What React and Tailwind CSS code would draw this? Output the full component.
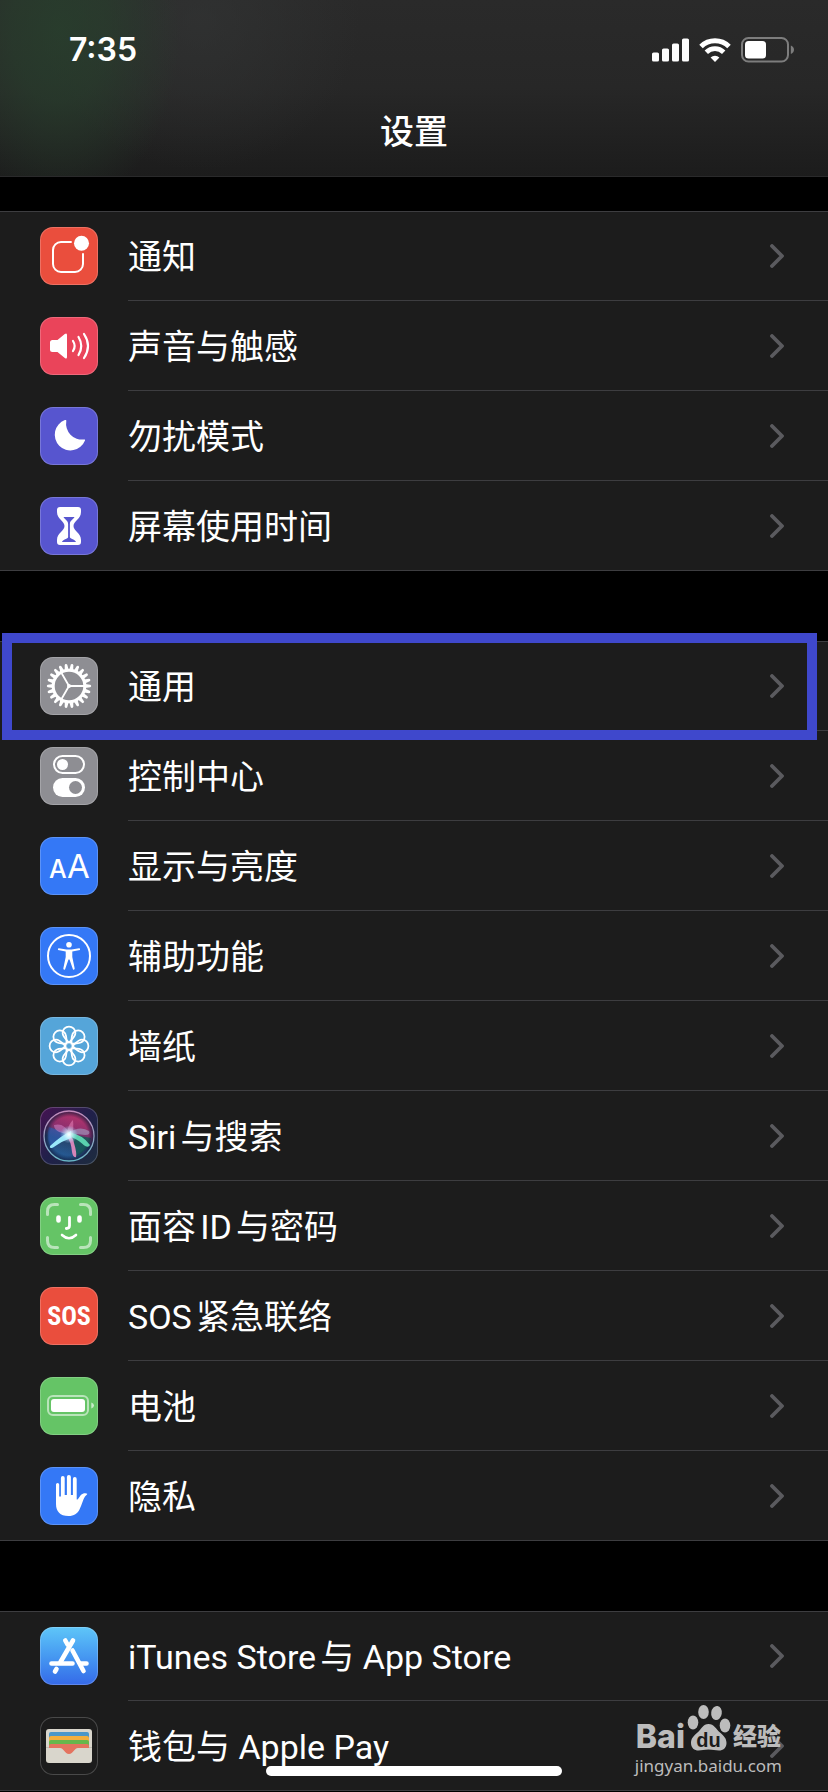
import React from "react";

function Tile({ className, children }) {
  return (
    <span
      className={`block size-[58px] shrink-0 overflow-hidden rounded-[13px] ring-1 ring-white/20 ring-inset ${className}`}
    >
      <svg viewBox="0 0 58 58" className="size-full" fill="none" aria-hidden="true">
        {children}
      </svg>
    </span>
  );
}

const gearTeeth = Array.from({ length: 22 }, (_, i) => (i * 360) / 22);
const petals = [0, 45, 90, 135, 180, 225, 270, 315];

const icons = {
  notifications: (
    <Tile className="bg-[#ea4e3d]">
      <path d="M31.7 15H21a8 8 0 0 0-8 8v14a8 8 0 0 0 8 8h14a8 8 0 0 0 8-8V26.3" stroke="#fff" strokeWidth="2" />
      <circle cx="41.5" cy="16.3" r="7.5" fill="#fff" />
    </Tile>
  ),
  sound: (
    <Tile className="bg-[#ea445a]">
      <path d="M12.5 23H17.5L24.8 17Q27 15.600 27 18V40Q27 42.400 24.800 41L17.500 35H12.500Q10 35 10 32.500V25.500Q10 23 12.500 23Z" fill="#fff" />
      <path d="M33 24Q36.300 29 33 34M38.500 20Q44 29 38.500 38M44 17Q52 29 44 41" stroke="#fff" strokeWidth="2.2" strokeLinecap="round" />
    </Tile>
  ),
  moon: (
    <Tile className="bg-[#5755cf]">
      <path d="M24.900 13A15.700 15.700 0 1 0 45 33.600C45.400 32.700 44.700 32.200 44 32.500A16 16 0 0 1 26.300 13.900C26.500 13 25.700 12.700 24.900 13Z" fill="#fff" />
    </Tile>
  ),
  hourglass: (
    <Tile className="bg-[#5755cf]">
      <path d="M20 10H38Q41 10 41 13V15C41 22 33.500 24 33.500 29S41 36 41 43V45Q41 48 38 48H20Q17 48 17 45V43C17 36 24.500 34 24.500 29S17 22 17 15V13Q17 10 20 10Z" fill="#fff" />
      <path d="M23.500 20H34.500C33 22.500 29.900 23.500 29.900 27V40C29.900 42 35.500 42.500 36 45H22C22.500 42.500 28.100 42 28.100 40V27C28.100 23.500 25 22.500 23.500 20Z" fill="#5755cf" />
    </Tile>
  ),
  gear: (
    <Tile className="bg-[#8e8e93]">
      {gearTeeth.map((a) => (
        <path key={a} d="M45 27L50.200 27.700Q51.200 28 51.200 29T50.200 30.300L45 31Z" fill="#fff" transform={`rotate(${a} 29 29)`} />
      ))}
      <circle cx="29" cy="29" r="15.800" stroke="#fff" strokeWidth="3" />
      <path d="M29 29H44M29 29L21.500 16M29 29L21.500 42" stroke="#fff" strokeWidth="1.800" />
      <circle cx="29" cy="29" r="2" fill="#fff" />
    </Tile>
  ),
  toggles: (
    <Tile className="bg-[#8e8e93]">
      <rect x="14" y="9" width="30" height="17" rx="8.500" stroke="#fff" strokeWidth="2" />
      <circle cx="22.500" cy="17.500" r="5.500" fill="#fff" />
      <rect x="13" y="31" width="32" height="19" rx="9.500" fill="#fff" />
      <circle cx="35.500" cy="40.500" r="6.500" fill="#8e8e93" />
    </Tile>
  ),
  display: (
    <Tile className="bg-[#3478f6]">
      <text x="9" y="41" fill="#fff" fontFamily="Inter, sans-serif" fontWeight="500" fontSize="25">A</text>
      <text x="27" y="41" fill="#fff" fontFamily="Inter, sans-serif" fontSize="33">A</text>
    </Tile>
  ),
  accessibility: (
    <Tile className="bg-[#3478f6]">
      <circle cx="29" cy="29" r="21" stroke="#fff" strokeWidth="2" />
      <circle cx="29" cy="17.700" r="2.800" fill="#fff" />
      <path d="M18.800 21.300L26.500 22.400H31.500L39.200 21.300Q40.600 21.600 40 23L32.300 24.600V30L34.700 41.500Q34.400 43 33 42.600L29.500 32.600H28.500L25 42.600Q23.600 43 23.300 41.500L25.700 30V24.600L18 23Q17.400 21.600 18.800 21.300Z" fill="#fff" />
    </Tile>
  ),
  wallpaper: (
    <Tile className="bg-[#55a5d9]">
      {petals.map((a) => (
        <path key={a} d="M29 25.500C25.500 22 22.600 19.500 22.600 16A6.400 6.400 0 0 1 35.400 16C35.400 19.500 32.500 22 29 25.500Z" stroke="#fff" strokeWidth="1.800" transform={`rotate(${a} 29 29)`} />
      ))}
      <circle cx="29" cy="29" r="3.800" stroke="#fff" strokeWidth="1.800" />
    </Tile>
  ),
  siri: (
    <Tile className="bg-linear-to-br from-[#451052] via-[#20204a] to-[#1d2c3e]">
      <defs>
        <linearGradient id="siriOrb" x1="0.600" y1="0" x2="0.300" y2="1">
          <stop offset="0" stopColor="#c2356f" />
          <stop offset="0.350" stopColor="#91306f" />
          <stop offset="0.600" stopColor="#26456f" />
          <stop offset="1" stopColor="#2767a8" />
        </linearGradient>
        <linearGradient id="siriRing" x1="0" y1="0" x2="0" y2="1">
          <stop offset="0" stopColor="#c68bbb" />
          <stop offset="1" stopColor="#68b8c8" />
        </linearGradient>
        <radialGradient id="siriGlow">
          <stop offset="0" stopColor="#fff" />
          <stop offset="0.400" stopColor="#d5f5ff" stopOpacity="0.700" />
          <stop offset="1" stopColor="#8ad0ff" stopOpacity="0" />
        </radialGradient>
        <radialGradient id="siriShade">
          <stop offset="0" stopColor="#101a3a" stopOpacity="0" />
          <stop offset="0.800" stopColor="#101a3a" stopOpacity="0.050" />
          <stop offset="1" stopColor="#101a3a" stopOpacity="0.700" />
        </radialGradient>
      </defs>
      <circle cx="29" cy="29" r="24" fill="url(#siriOrb)" />
      <path d="M29 27L51 31Q49 44 35 50Z" fill="#155c58" opacity="0.800" />
      <path d="M29 27L9 20Q5 32 12 42Z" fill="#2f5fb5" opacity="0.700" />
      <circle cx="29" cy="29" r="24" fill="url(#siriShade)" />
      <path d="M29 27Q14 26 14 18Q24 15 30 27Z" fill="#d98ad0" opacity="0.500" />
      <path d="M27 27Q28 17 33 13Q34 22 32 28Z" fill="#f08ac0" opacity="0.500" />
      <path d="M28 26Q40 18 49 24Q51 28 45 28Z" fill="#a5b9d8" opacity="0.500" />
      <path d="M29 25Q43 28 50 38Q48 42 42 36.500Q35 30.500 28 29.500Z" fill="#65e7bd" opacity="0.850" />
      <path d="M27 27Q33 29 34 36Q37 46 36 50Q33 51 32 45Q31 34 27 30Z" fill="#e98bc1" opacity="0.900" />
      <path d="M31 24Q22 28 10 39Q9 42 13 40.500Q22 34 31 31Z" fill="#9ff0ff" opacity="0.950" />
      <circle cx="29" cy="27.500" r="9" fill="url(#siriGlow)" />
      <circle cx="29" cy="29" r="25" stroke="url(#siriRing)" strokeWidth="1.300" />
    </Tile>
  ),
  faceId: (
    <Tile className="bg-[#65c466]">
      <path d="M7.500 17.500V14.500Q7.500 7.500 14.500 7.500H17.500M40.500 7.500H43.500Q50.500 7.500 50.500 14.500V17.500M50.500 40.500V43.500Q50.500 50.500 43.500 50.500H40.500M17.500 50.500H14.500Q7.500 50.500 7.500 43.500V40.500" stroke="#fff" strokeOpacity="0.550" strokeWidth="3" strokeLinecap="round" />
      <path d="M18.500 20.500V23.500M39.500 20.500V23.500" stroke="#fff" strokeWidth="4.600" strokeLinecap="round" />
      <path d="M29.500 20.500V28.500Q29.500 31.500 26.300 31.500" stroke="#fff" strokeWidth="2.800" strokeLinecap="round" />
      <path d="M22 38Q29 44.500 36 38" stroke="#fff" strokeWidth="2.600" strokeLinecap="round" />
    </Tile>
  ),
  sos: (
    <Tile className="bg-[#ea4e3d]">
      <text x="29" y="38" textAnchor="middle" fill="#fff" fontFamily="'Roboto Condensed', Roboto, sans-serif" fontWeight="700" fontSize="26">SOS</text>
    </Tile>
  ),
  battery: (
    <Tile className="bg-[#65c466]">
      <rect x="8" y="19" width="40" height="19" rx="5" stroke="#fff" strokeOpacity="0.550" strokeWidth="2" />
      <rect x="11" y="22" width="34" height="13" rx="3" fill="#fff" />
      <path d="M51.300 25.500Q54 26.500 54 28.500T51.300 31.500Z" fill="#fff" fillOpacity="0.650" />
    </Tile>
  ),
  hand: (
    <Tile className="bg-[#3478f6]">
      <path d="M16 17.500a1.600 1.600 0 0 1 3.200 0V29.500h1.700V11a1.900 1.900 0 0 1 3.800 0V28h2.200V10a2 2 0 0 1 4 0V28h2V12a1.900 1.900 0 0 1 3.800 0V32.500C38.300 33 39.500 29 41.500 27.500C43.500 26 46.300 26 47.200 26.800C47.500 27.600 46.500 27.700 45 29.500C43 32.500 42 37.500 39.500 42.500C37.500 46.500 34 49 28.500 49C20 49 16 44.500 16 37Z" fill="#fff" />
    </Tile>
  ),
  appStore: (
    <Tile className="bg-linear-to-b from-[#5fc6f8] to-[#3669e8]">
      <path d="M33 13.500L20.500 35M16.500 42L15 44.500" stroke="#fff" strokeWidth="4.600" strokeLinecap="round" />
      <path d="M25.300 13.500L27.500 17.500M32.500 23.500L43.500 44" stroke="#fff" strokeWidth="4.600" strokeLinecap="round" />
      <path d="M11.500 36.500H32.500M41 36.500H46.500" stroke="#fff" strokeWidth="4.600" strokeLinecap="round" />
    </Tile>
  ),
  wallet: (
    <Tile className="bg-[#1c1c1c]">
      <rect x="6" y="12" width="46" height="34" rx="3" fill="#d9d6cc" />
      <path d="M9 30V17Q9 15 11 15H47Q49 15 49 17V30Z" fill="#4b97c9" />
      <path d="M9 30V21Q9 19 11 19H47Q49 19 49 21V30Z" fill="#f3af3d" />
      <path d="M9 30V25Q9 23 11 23H47Q49 23 49 25V30Z" fill="#67b74c" />
      <path d="M9 31V29Q9 27 11 27H47Q49 27 49 29V31H38C34 31 33.500 37 29 37S24 31 20 31Z" fill="#e4735f" />
      <path d="M6 30.500H9M49 30.500H52" stroke="#b9b6ac" strokeWidth="0.800" />
    </Tile>
  ),
};

const groups = [
  [
    { icon: "notifications", label: "通知" },
    { icon: "sound", label: "声音与触感" },
    { icon: "moon", label: "勿扰模式" },
    { icon: "hourglass", label: "屏幕使用时间" },
  ],
  [
    { icon: "gear", label: "通用", highlighted: true },
    { icon: "toggles", label: "控制中心" },
    { icon: "display", label: "显示与亮度" },
    { icon: "accessibility", label: "辅助功能" },
    { icon: "wallpaper", label: "墙纸" },
    { icon: "siri", label: "Siri与搜索" },
    { icon: "faceId", label: "面容ID与密码" },
    { icon: "sos", label: "SOS紧急联络" },
    { icon: "battery", label: "电池" },
    { icon: "hand", label: "隐私" },
  ],
  [
    { icon: "appStore", label: "iTunes Store与 App Store" },
    { icon: "wallet", label: "钱包与 Apple Pay" },
  ],
];

function Row({ icon, label, highlighted, last }) {
  return (
    <li className={`relative h-[90px] ${last ? "border-b border-[#3d3d40]" : ""}`}>
      <a href="#" className="flex h-full items-stretch gap-[30px] pl-10">
        <span className="pt-4">{icons[icon]}</span>
        <span className={`flex flex-1 items-center justify-between pr-11 ${last ? "" : "border-b border-[#3d3d40]"}`}>
          <span className="pt-0.5 text-[34px] leading-[48px] [text-autospace:normal]">{label}</span>
          <svg viewBox="0 0 14 24" className="h-6 w-3.5" fill="none" aria-hidden="true">
            <path d="M2 2L12 12L2 22" stroke="#5a5a5e" strokeWidth="3.800" strokeLinecap="round" strokeLinejoin="round" />
          </svg>
        </span>
      </a>
      {highlighted && (
        <span className="pointer-events-none absolute -top-2 right-[11px] -bottom-[9px] left-0.5 z-10 border-10 border-[#3f48cc]" />
      )}
    </li>
  );
}

function StatusBar() {
  return (
    <div className="flex items-center justify-between pt-[30px] pr-[34px] pl-[69px]">
      <time className="font-['Inter',sans-serif] text-[32px] leading-10 font-semibold">7:35</time>
      <div className="flex items-center gap-2.5">
        <svg viewBox="0 0 37 24" className="h-6 w-[37px]" fill="#fff" aria-hidden="true">
          <rect x="0" y="14.500" width="7" height="9" rx="1.600" />
          <rect x="10" y="10.500" width="7" height="13" rx="1.600" />
          <rect x="20" y="5.500" width="7" height="18" rx="1.600" />
          <rect x="30" y="0.500" width="7" height="23" rx="1.600" />
        </svg>
        <svg viewBox="0 0 32 24" className="h-6 w-8" fill="none" aria-hidden="true">
          <path d="M2 8.500A20 20 0 0 1 30 8.500" stroke="#fff" strokeWidth="5" />
          <path d="M7.300 14.200A12.400 12.400 0 0 1 24.700 14.200" stroke="#fff" strokeWidth="4.800" />
          <path d="M16 24L11.600 19.400A6.500 6.500 0 0 1 20.400 19.400Z" fill="#fff" />
        </svg>
        <svg viewBox="0 0 53 26" className="h-[26px] w-[53px]" fill="none" aria-hidden="true">
          <rect x="1" y="1" width="46" height="23.500" rx="6.500" stroke="#7d7d7d" strokeWidth="2" />
          <rect x="4" y="4" width="21" height="17.500" rx="3.500" fill="#fff" />
          <path d="M49.800 8.500Q53 10 53 12.800T49.800 17Z" fill="#7d7d7d" />
        </svg>
      </div>
    </div>
  );
}

function Watermark() {
  return (
    <div className="pointer-events-none absolute right-[46px] bottom-3.5 flex flex-col items-center gap-0.5 text-[#bcbcbc]">
      <div className="flex items-end gap-0.5">
        <span className="font-['Inter',sans-serif] text-[32px] leading-[30px] font-extrabold">Bai</span>
        <svg viewBox="0 0 44 48" className="h-12 w-11" fill="#bcbcbc" aria-hidden="true">
          <ellipse cx="6" cy="18.500" rx="5.300" ry="7" />
          <ellipse cx="16.500" cy="8" rx="5.300" ry="7" />
          <ellipse cx="29.500" cy="9" rx="5.300" ry="7" transform="rotate(8 29.500 9)" />
          <ellipse cx="38" cy="21.500" rx="5.300" ry="7" />
          <path d="M21.500 20C27 20 29 25 33 28.500C37 32 39.500 34.500 39.500 39C39.500 44 36 46.500 32 46.500C28 46.500 26 45.500 21.500 45.500S15 46.500 11.500 46.500C7.500 46.500 4 44 4 39C4 34.500 6.500 32 10.500 28.500C14.500 25 16 20 21.500 20Z" />
          <text x="21.500" y="43" textAnchor="middle" fill="#1c1c1c" fontFamily="'Liberation Sans', sans-serif" fontWeight="700" fontSize="20">du</text>
        </svg>
        <span className="text-2xl leading-[30px] font-black">经验</span>
      </div>
      <span className="font-['Noto_Sans','Noto_Sans_CJK_SC',sans-serif] text-[17px] leading-6">jingyan.baidu.com</span>
    </div>
  );
}

export default function App() {
  return (
    <div className="relative min-h-screen bg-black font-['Roboto','Noto_Sans_CJK_SC',sans-serif] text-white">
      <header className="border-b border-[#2a2a2b] bg-[radial-gradient(ellipse_120px_180px_at_60px_30px,#28402dd0,#28402da0_40%,#28402d00),radial-gradient(ellipse_160px_150px_at_200px_20px,#333535a0,#33353500),linear-gradient(to_bottom,#2a2a2a,#272727_50%,#1c1c1c)] pb-5">
        <StatusBar />
        <h1 className="pt-[38px] text-center text-[34px] leading-[48px] font-medium">设置</h1>
      </header>
      <main className="flex flex-col gap-[70px] pt-[34px]">
        {groups.map((rows, g) => (
          <section key={g} className="border-t border-[#3d3d40] bg-[#1c1c1c]">
            <ul className="-mt-px">
              {rows.map((row, i) => (
                <Row key={row.label} {...row} last={i === rows.length - 1} />
              ))}
            </ul>
          </section>
        ))}
      </main>
      <Watermark />
      <div className="absolute inset-x-0 bottom-4 flex justify-center">
        <span className="h-2.5 w-[296px] rounded-full bg-white" />
      </div>
    </div>
  );
}
